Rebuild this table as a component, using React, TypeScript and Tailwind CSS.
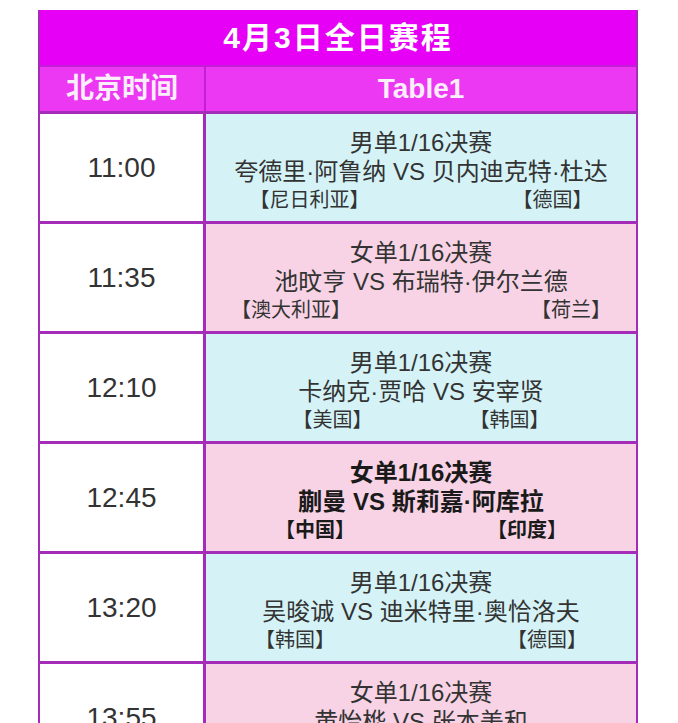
import React from "react";

type Row = {
  time: string;
  round: string;
  names: string;
  left: string;
  right: string;
  w: number;
  bg: "cyan" | "pink";
  bold?: boolean;
};

const rows: Row[] = [
  { time: "11:00", round: "男单1/16决赛", names: "夸德里·阿鲁纳 VS 贝内迪克特·杜达", left: "【尼日利亚】", right: "【德国】", w: 343, bg: "cyan" },
  { time: "11:35", round: "女单1/16决赛", names: "池旼亨 VS 布瑞特·伊尔兰德", left: "【澳大利亚】", right: "【荷兰】", w: 380, bg: "pink" },
  { time: "12:10", round: "男单1/16决赛", names: "卡纳克·贾哈 VS 安宰贤", left: "【美国】", right: "【韩国】", w: 257, bg: "cyan" },
  { time: "12:45", round: "女单1/16决赛", names: "蒯曼 VS 斯莉嘉·阿库拉", left: "【中国】", right: "【印度】", w: 292, bg: "pink", bold: true },
  { time: "13:20", round: "男单1/16决赛", names: "吴晙诚 VS 迪米特里·奥恰洛夫", left: "【韩国】", right: "【德国】", w: 332, bg: "cyan" },
  { time: "13:55", round: "女单1/16决赛", names: "黄怡桦 VS 张本美和", left: "【中国台北】", right: "【日本】", w: 310, bg: "pink" },
];

const font = { fontFamily: '"Liberation Sans", "Noto Sans CJK SC", sans-serif' };

export default function App() {
  return (
    <div className="bg-white w-[678px] h-[723px] overflow-hidden pt-[10px] pl-[38px]" style={font}>
      <div className="w-[600px] border-x-2 border-[#a42cb8]">
        <div className="h-[57px] bg-[#e600f6] flex items-center justify-center border-b-2 border-[#c21ed6]">
          <span className="text-white font-bold text-[30px] tracking-[2px] leading-none">4月3日全日赛程</span>
        </div>
        <div className="grid grid-cols-[166px_1fr] h-[47px] bg-[#ec38f2] border-b-[3px] border-[#a42cb8]">
          <div className="flex items-center justify-center border-r-2 border-[#c21ed6]">
            <span className="text-[#fbeefb] font-bold text-[28px] leading-none">北京时间</span>
          </div>
          <div className="flex items-center justify-center">
            <span className="text-[#fbeefb] font-bold text-[28px] leading-none">Table1</span>
          </div>
        </div>
        {rows.map((r) => (
          <div key={r.time} className="grid grid-cols-[166px_1fr] h-[110px] border-b-[3px] border-[#a42cb8]">
            <div className="bg-white flex items-center justify-center border-r-[3px] border-[#a42cb8]">
              <span className="text-[28px] text-[#333] leading-none">{r.time}</span>
            </div>
            <div
              className={`${r.bg === "cyan" ? "bg-[#d5f3f7]" : "bg-[#f7d3e5]"} flex flex-col items-center justify-center pt-[6px] ${r.bold ? "font-bold text-[#1a1a1a]" : "text-[#333]"}`}
            >
              <div className="text-[24px] leading-[29px]">{r.round}</div>
              <div className="text-[24px] leading-[29px] whitespace-nowrap">{r.names}</div>
              <div className="flex justify-between text-[20px] leading-[28px]" style={{ width: r.w }}>
                <span>{r.left}</span>
                <span>{r.right}</span>
              </div>
            </div>
          </div>
        ))}
      </div>
    </div>
  );
}
